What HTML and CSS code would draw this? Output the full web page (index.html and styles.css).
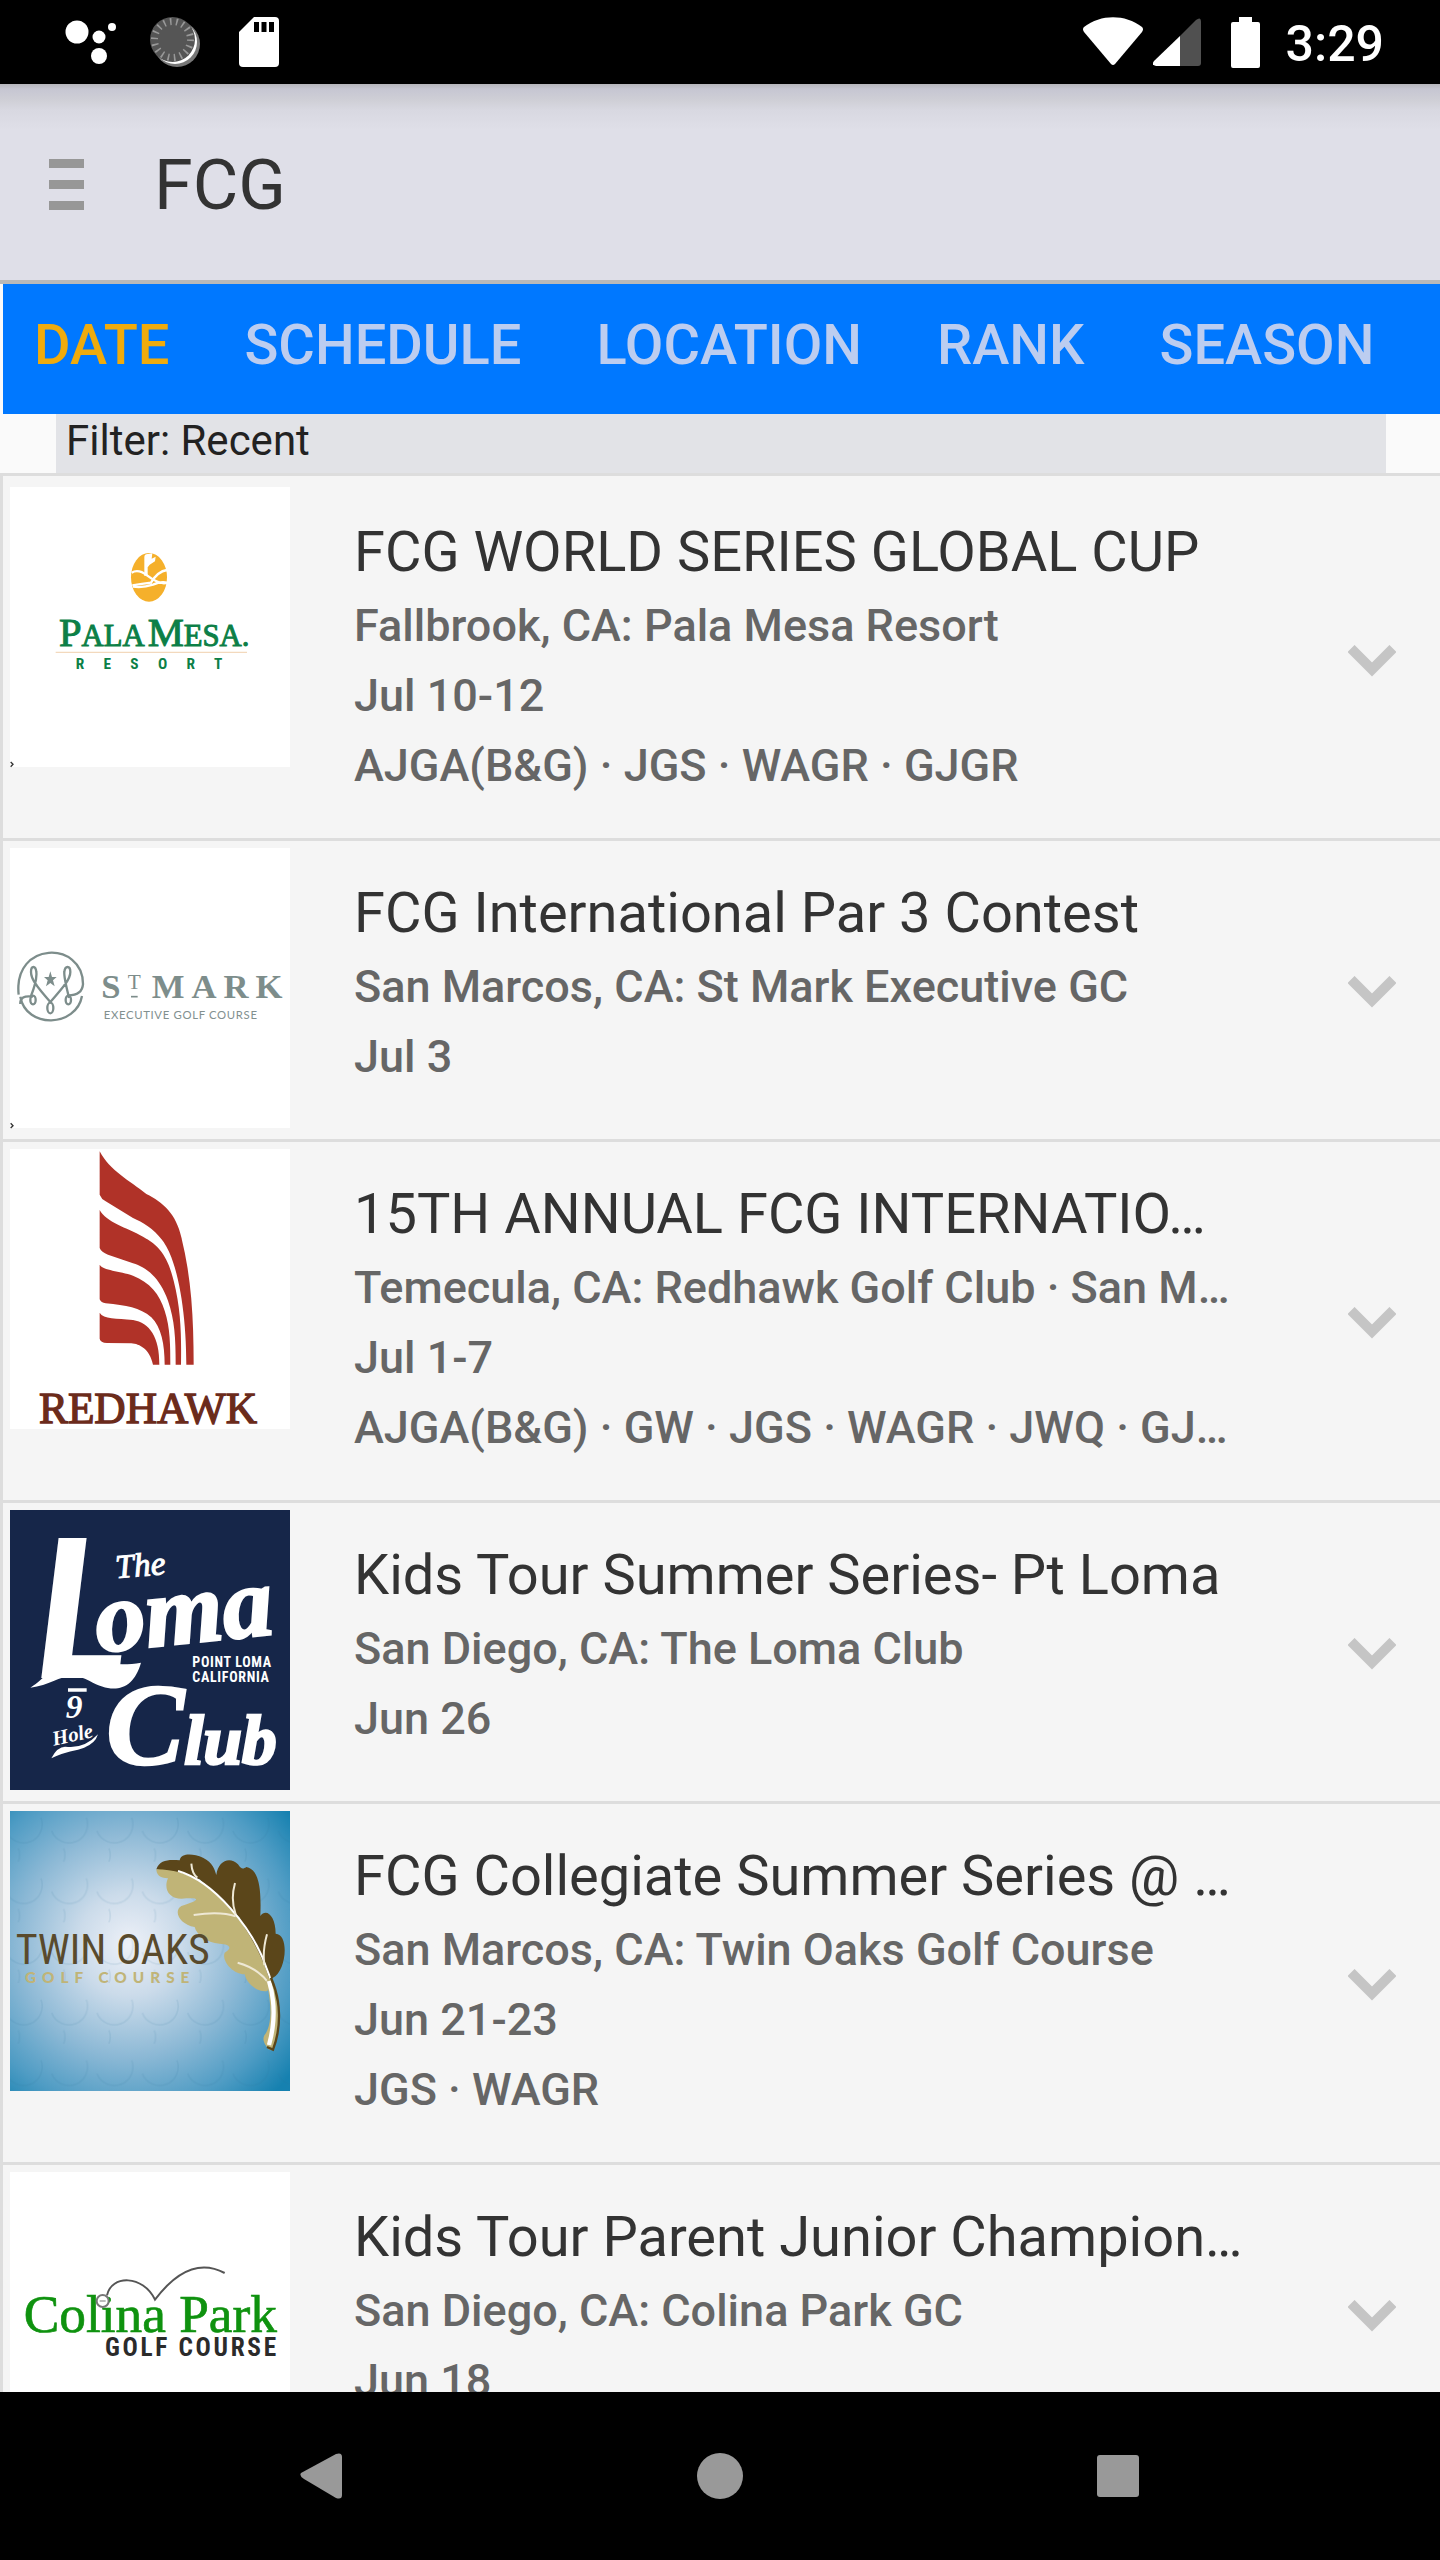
FILE: index.html
```html
<!DOCTYPE html>
<html lang="en">
<head>
<meta charset="utf-8">
<meta name="viewport" content="width=device-width, initial-scale=1">
<title>FCG</title>
<link rel="stylesheet" href="styles.css">
</head>
<body>
<div class="app">
  <div class="status">
    <div class="status-left">
      <svg width="52" height="44" viewBox="0 0 52 44" fill="#fff" aria-hidden="true"><circle cx="12" cy="12" r="11.5"/><circle cx="34" cy="17" r="6.5"/><circle cx="47" cy="7" r="4"/><circle cx="34" cy="36" r="8"/></svg>
      <svg width="50" height="50" viewBox="0 0 50 50" aria-hidden="true"><circle cx="27" cy="27" r="23" fill="#777"/><circle cx="25" cy="25" r="22" fill="#fff"/><circle cx="22.500" cy="22.500" r="22.500" fill="#555"/><circle cx="22.500" cy="22.500" r="18" fill="none" stroke="#999" stroke-width="7" stroke-dasharray="1.600 4.683"/></svg>
      <svg width="40" height="50" viewBox="0 0 40 50" aria-hidden="true"><path d="M15 0h21a4 4 0 0 1 4 4v42a4 4 0 0 1-4 4H4a4 4 0 0 1-4-4V15z" fill="#fff"/><path d="M15 5h5v10h-5zM22.500 5h5v10h-5zM30 5h5v10h-5z"/></svg>
    </div>
    <div class="status-right">
      <svg width="60" height="50" viewBox="0 0 60 50" fill="#fff" aria-hidden="true"><path d="M1 10C18-3 42-3 59 10q2 2 0 5L32 47q-2 2-4 0L1 15q-2-3 0-5z"/></svg>
      <svg class="signal" width="48" height="48" viewBox="0 0 48 48" aria-hidden="true"><path d="M27 18 43 2q5-4 5 2v41q0 3-3 3H27z" fill="#505050"/><path d="M27 18v30H3q-5-1-2-5z" fill="#fff"/></svg>
      <svg width="29" height="51" viewBox="0 0 29 51" fill="#fff" aria-hidden="true"><path d="M8 0h13v5h6q2 0 2 2v42q0 2-2 2H2q-2 0-2-2V7q0-2 2-2h6z"/></svg>
      <time class="clock">3:29</time>
    </div>
  </div>

  <header class="header">
    <button class="menu" type="button" aria-label="Menu">
      <svg width="35" height="51" viewBox="0 0 35 51" fill="#979797"><path d="M0 0h35v9H0zM0 21h35v9H0zM0 42h35v9H0z"/></svg>
    </button>
    <h1 class="title">FCG</h1>
  </header>

  <nav class="tabs">
    <a class="tab active" href="#date">DATE</a>
    <a class="tab" href="#schedule">SCHEDULE</a>
    <a class="tab" href="#location">LOCATION</a>
    <a class="tab" href="#rank">RANK</a>
    <a class="tab" href="#season">SEASON</a>
  </nav>

  <p class="filter">Filter: Recent</p>

  <main class="list">
    <article class="row">
      <svg class="logo" viewBox="31 51 840 840">
        <path d="M31 51h840v840H31z" fill="#fff"/>
        <ellipse cx="448" cy="322" rx="54" ry="73" fill="#f5b02b"/>
        <path d="M396 308q20-12 46 8 40 30 60 22M398 346q30-4 56-8 20-34 48-38M400 350q30 4 60-6 22-10 42-6" fill="none" stroke="#fff" stroke-width="7"/>
        <path d="M434 318V262q0-10 10-10l14-2-2 16 12-6-2 14-16 10-6 8v24z" fill="#fff"/>
        <g class="serif" fill="#0c7f47" stroke="#0c7f47" stroke-width="3"><text x="178" y="527" font-size="122">P<tspan font-size="92">ALA</tspan></text><text x="444" y="527" font-size="122">M<tspan font-size="92">ESA.</tspan></text></g>
        <path d="M168 547h574" stroke="#f3d9bd" stroke-width="4"/>
        <text class="narrow track-wide" x="228" y="597" font-size="46" font-weight="700" fill="#0c7f47">RESORT</text>
        <path d="M33 876l7 7-7 7" fill="none" stroke="#333" stroke-width="4"/>
      </svg>
      <div class="info">
        <h2>FCG WORLD SERIES GLOBAL CUP</h2>
        <p>Fallbrook, CA: Pala Mesa Resort</p>
        <p>Jul 10-12</p>
        <p>AJGA(B&amp;G) · JGS · WAGR · GJGR</p>
      </div>
      <button class="expand" type="button" aria-label="Expand"><svg width="48" height="32" viewBox="0 0 48 32"><path d="M3 3.500 24 24.500 45 3.500" fill="none" stroke="#c5c5c5" stroke-width="10"/></svg></button>
    </article>

    <article class="row">
      <svg class="logo" viewBox="31 52 840 840">
        <path d="M31 52h840v840H31z" fill="#fff"/>
        <g fill="none" stroke="#7d8d8b" stroke-width="7">
          <path d="M57 492C40 330 250 330 250 460q-2 34-44 34M62 498C80 596 230 590 247 496"/>
          <path d="M62 520q-2-28 38-22M94 496C108 460 112 440 110 424 108 404 94 404 94 424c0 20 14 40 58 90 44-50 60-70 60-90 0-20-16-20-18 0-2 16 8 50 14 78"/>
          <ellipse cx="100" cy="508" rx="8" ry="13"/><ellipse cx="206" cy="508" rx="8" ry="13"/><ellipse cx="152" cy="532" rx="9" ry="16"/>
        </g>
        <path d="M152 422l5 17h14l-11 10 5 18-13-10-13 10 5-18-11-10h14z" fill="#7d8d8b"/>
        <g class="serif" fill="#7d8d8b" font-weight="700"><text x="305" y="503" font-size="104">S</text><text x="384" y="476" font-size="64" font-weight="400">T</text><text class="track-mark" x="456" y="503" font-size="104">MARK</text></g>
        <path d="M394 498h20" stroke="#7d8d8b" stroke-width="5"/>
        <text class="lato track-small" x="312" y="566" font-size="34" fill="#82908f">EXECUTIVE GOLF COURSE</text>
        <path d="M33 878l7 7-7 7" fill="none" stroke="#333" stroke-width="4"/>
      </svg>
      <div class="info">
        <h2>FCG International Par 3 Contest</h2>
        <p>San Marcos, CA: St Mark Executive GC</p>
        <p>Jul 3</p>
      </div>
      <button class="expand" type="button" aria-label="Expand"><svg width="48" height="32" viewBox="0 0 48 32"><path d="M3 3.500 24 24.500 45 3.500" fill="none" stroke="#c5c5c5" stroke-width="10"/></svg></button>
    </article>

    <article class="row">
      <svg class="logo" viewBox="31 55 840 840">
        <path d="M31 55h840v840H31z" fill="#fff"/>
        <g fill="#b03228">
          <path d="M300 62C330 120 390 150 440 190 490 215 530 250 545 320 575 440 582 560 582 702H560C560 580 545 460 515 380 490 310 440 280 400 262L318 212Q305 205 300 192z"/>
          <path d="M300 238C320 275 380 290 430 318 480 345 505 380 522 450 545 540 545 620 544 702H528C528 620 525 570 505 510 480 440 440 410 400 398L325 372Q305 365 300 352z"/>
          <path d="M300 402C310 420 360 420 400 435 450 455 480 490 495 540 512 590 512 650 512 702H495C495 640 485 590 455 560 420 530 380 525 318 518Q304 516 300 506z"/>
          <path d="M300 546C312 566 350 562 400 568 450 576 480 620 479 702H460C450 655 420 640 395 638L322 637Q302 636 300 624z"/>
        </g>
        <text class="serif" x="118" y="878" font-size="130" fill="#6b2b1b" stroke="#6b2b1b" stroke-width="4">REDHAWK</text>
      </svg>
      <div class="info">
        <h2>15TH ANNUAL FCG INTERNATIO…</h2>
        <p>Temecula, CA: Redhawk Golf Club · San M…</p>
        <p>Jul 1-7</p>
        <p>AJGA(B&amp;G) · GW · JGS · WAGR · JWQ · GJ…</p>
      </div>
      <button class="expand" type="button" aria-label="Expand"><svg width="48" height="32" viewBox="0 0 48 32"><path d="M3 3.500 24 24.500 45 3.500" fill="none" stroke="#c5c5c5" stroke-width="10"/></svg></button>
    </article>

    <article class="row">
      <svg class="logo" viewBox="31 57 840 840">
        <path d="M31 57h840v840H31z" fill="#162649"/>
        <text class="lato" x="105" y="560" font-size="580" font-weight="900" font-style="italic" fill="#fff">L</text>
        <g class="serif" fill="#fff" font-weight="700" font-style="italic">
          <text x="296" y="484" font-size="300" stroke="#fff" stroke-width="8" transform="rotate(-6 296 484)">oma</text>
          <text x="350" y="262" font-size="100" transform="rotate(-5 350 262)" font-weight="400" stroke="#fff" stroke-width="3">The</text>
          <text x="320" y="818" font-size="350" stroke="#fff" stroke-width="8">C<tspan font-size="208">lub</tspan></text>
          <text x="198" y="680" font-size="100">9</text>
          <text x="162" y="764" font-size="62" transform="rotate(-12 162 764)">Hole</text>
        </g>
        <path d="M92 590C140 560 160 520 190 522 260 500 340 530 424 515 400 600 340 610 270 570 200 530 170 580 92 590zM205 592h56v10h-56zM155 802q20-40 50-34 50 4 90-38-10 34-60 46-50 10-80 26z" fill="#fff"/>
        <g class="narrow track-loma" fill="#fff" font-weight="700" font-size="42"><text x="578" y="527">POINT LOMA</text><text x="578" y="573">CALIFORNIA</text></g>
      </svg>
      <div class="info">
        <h2>Kids Tour Summer Series- Pt Loma</h2>
        <p>San Diego, CA: The Loma Club</p>
        <p>Jun 26</p>
      </div>
      <button class="expand" type="button" aria-label="Expand"><svg width="48" height="32" viewBox="0 0 48 32"><path d="M3 3.500 24 24.500 45 3.500" fill="none" stroke="#c5c5c5" stroke-width="10"/></svg></button>
    </article>

    <article class="row">
      <svg class="logo" viewBox="31 30 840 840">
        <defs>
          <radialGradient id="sky" cx="390" cy="430" r="620" gradientUnits="userSpaceOnUse"><stop offset="0" stop-color="#eef1f8"/><stop offset=".25" stop-color="#cbdbea"/><stop offset=".55" stop-color="#8bb8d5"/><stop offset=".8" stop-color="#4f9cc4"/><stop offset="1" stop-color="#1681b0"/></radialGradient>
          <pattern id="dimples" width="136" height="182" patternUnits="userSpaceOnUse"><g fill="none" stroke="#2a6f98" stroke-opacity=".1" stroke-width="5"><path d="M20 90a52 52 0 0 0 104-40M-48 182a52 52 0 0 0 104-40M88 182a52 52 0 0 0 104-40"/></g></pattern>
        </defs>
        <path d="M31 30h840v840H31z" fill="url(#sky)"/>
        <path d="M31 30h840v840H31z" fill="url(#dimples)"/>
        <path d="M470 205C480 175 510 175 540 178 545 155 580 158 610 170 640 185 645 205 650 222 655 180 690 165 715 190 725 205 730 205 740 198 780 205 785 270 782 345 800 320 828 345 828 398 870 400 860 510 820 530L805 545 720 350 600 235z" fill="#5b461a"/>
        <path d="M470 205C520 205 570 220 610 245 700 310 780 430 812 545L803 570C770 575 740 545 735 520 700 520 665 480 675 455 700 440 690 430 660 428 620 425 590 400 585 378 540 370 520 330 545 315 590 300 610 290 560 292 510 300 490 265 505 232 480 232 470 220 470 205z" fill="#c0b477"/>
        <path d="M535 210C640 240 760 380 800 500 830 570 830 640 815 740" fill="none" stroke="#fff" stroke-width="6"/>
        <path d="M575 188q2 30 18 42M706 246q-14 50 2 94M582 342q80-12 126 4M802 400q-14 50-8 92M714 485q60 16 94 62" fill="none" stroke="#eee8d5" stroke-width="6"/>
        <path d="M812 530C845 600 845 680 822 745q-14 8-20-6-16-22-8-36C822 670 812 590 800 540z" fill="#c0b477"/>
        <path d="M808 540C826 600 828 660 808 732" fill="none" stroke="#fff" stroke-width="13"/>
        <path d="M814 530C845 600 845 680 820 746l-18-8" fill="none" stroke="#5b461a" stroke-width="7"/>
        <text class="narrow" x="48" y="490" font-size="126" fill="#594a2c">TWIN OAKS</text>
        <text class="lato track-oaks" x="76" y="547" font-size="46" font-weight="900" fill="#c0b477">GOLF COURSE</text>
      </svg>
      <div class="info">
        <h2>FCG Collegiate Summer Series @ …</h2>
        <p>San Marcos, CA: Twin Oaks Golf Course</p>
        <p>Jun 21-23</p>
        <p>JGS · WAGR</p>
      </div>
      <button class="expand" type="button" aria-label="Expand"><svg width="48" height="32" viewBox="0 0 48 32"><path d="M3 3.500 24 24.500 45 3.500" fill="none" stroke="#c5c5c5" stroke-width="10"/></svg></button>
    </article>

    <article class="row">
      <svg class="logo" viewBox="31 62 840 840">
        <path d="M31 62h840v840H31z" fill="#fff"/>
        <text class="serif" x="72" y="541" font-size="160" fill="#0f920f" stroke="#0f920f" stroke-width="2">Colina Park</text>
        <circle cx="309" cy="449" r="18" fill="#fff" stroke="#777" stroke-width="6"/>
        <path d="M300 449h18" stroke="#999" stroke-width="4"/>
        <path d="M322 432C335 370 430 370 466 445 530 360 600 325 675 365" fill="none" stroke="#555" stroke-width="6"/>
        <text class="narrow track-colina" x="316" y="615" font-size="76" font-weight="700" fill="#2b2b2b">GOLF COURSE</text>
      </svg>
      <div class="info">
        <h2>Kids Tour Parent Junior Champion…</h2>
        <p>San Diego, CA: Colina Park GC</p>
        <p>Jun 18</p>
      </div>
      <button class="expand" type="button" aria-label="Expand"><svg width="48" height="32" viewBox="0 0 48 32"><path d="M3 3.500 24 24.500 45 3.500" fill="none" stroke="#c5c5c5" stroke-width="10"/></svg></button>
    </article>
  </main>

  <div class="navbar">
    <button type="button" aria-label="Back"><svg width="46" height="46" viewBox="0 0 46 46" fill="#999"><path d="M2 20 37 1q6-2 6 3v38q0 5-6 3L5 26q-5-3-3-6z"/></svg></button>
    <button type="button" aria-label="Home"><svg width="46" height="46" viewBox="0 0 46 46" fill="#999"><circle cx="23" cy="23" r="23"/></svg></button>
    <button type="button" aria-label="Recent apps"><svg width="46" height="46" viewBox="0 0 46 46" fill="#999"><rect x="2" y="2" width="42" height="42" rx="3"/></svg></button>
  </div>
</div>
</body>
</html>
```
FILE: styles.css
```css
* { box-sizing: border-box; }

body {
  margin: 0;
  background: #fafafa;
  color: #333;
  font-family: Roboto, "Liberation Sans", sans-serif;
}

h1, h2, p { margin: 0; font-weight: 400; }

button {
  padding: 0;
  border: 0;
  background: none;
  font: inherit;
  cursor: pointer;
}

svg { display: block; flex: none; }

.app {
  display: flex;
  flex-direction: column;
  height: 100vh;
}

.status {
  flex: none;
  display: flex;
  justify-content: space-between;
  align-items: center;
  height: 84px;
  padding: 0 56px 0 65px;
  background: #000;
}

.status-left { display: flex; align-items: center; gap: 33px; }
.status-left svg:nth-child(2) { margin-right: 6px; }
.status-right { display: flex; align-items: center; gap: 10px; }
.signal { margin-right: 20px; }

.clock {
  margin-left: 16px;
  padding-top: 4px;
  color: #fff;
  font-size: 50px;
  font-weight: 500;
  line-height: 60px;
}

.header {
  flex: none;
  display: flex;
  align-items: center;
  gap: 70px;
  height: 200px;
  padding: 5px 0 0 49px;
  border-bottom: 4px solid #b9b9b9;
  background: linear-gradient(#b6b6bb, #c6c6d2 5px, #cfcfd6 16px, #d8d8e1 26px, #dfdfe8 46px);
}

.title { font-size: 70px; line-height: 84px; }

.tabs {
  flex: none;
  display: flex;
  gap: 75px;
  margin-left: 3px;
  padding: 25px 31px 33px;
  background: #0078ff;
}

.tab {
  color: #bccdf0;
  font-size: 56px;
  font-weight: 500;
  line-height: 72px;
  text-decoration: none;
}

.tab.active { color: #f0ab0c; }

.filter {
  flex: none;
  margin: 0 54px 0 56px;
  padding: 1px 10px 6px;
  background: #e2e3e7;
  color: #222;
  font-size: 42px;
  line-height: 52px;
}

.list {
  flex: 1;
  min-height: 0;
  overflow-y: auto;
  scrollbar-width: none;
  border-top: 3px solid #ddd;
  border-left: 3px solid #ddd;
  padding-top: 4px;
  background: #f5f5f5;
}

.row {
  display: flex;
  align-items: flex-start;
  padding: 7px 44px 11px 7px;
  border-bottom: 3px solid #ddd;
}

.logo { width: 280px; height: 280px; overflow: visible; }

.info {
  flex: 1;
  min-width: 0;
  margin-left: 64px;
  padding: 26px 0;
}

.info h2, .info p {
  overflow: hidden;
  white-space: nowrap;
  text-overflow: ellipsis;
}

.info h2 { font-size: 56px; line-height: 78px; }

.info p {
  color: #666;
  font-size: 45px;
  font-weight: 500;
  line-height: 70px;
}

.expand { align-self: center; margin: 8px 0 0 40px; }

.serif { font-family: "Liberation Serif", serif; }
.narrow { font-family: "Liberation Sans Narrow", "Roboto Condensed", "Liberation Sans", sans-serif; }
.lato { font-family: Lato, sans-serif; }
.track-wide { letter-spacing: 58px; }
.track-mark { letter-spacing: 21px; }
.track-small { letter-spacing: 2px; }
.track-loma { letter-spacing: 2px; }
.track-oaks { letter-spacing: 18px; }
.track-colina { letter-spacing: 8px; }

.navbar {
  flex: none;
  display: flex;
  justify-content: center;
  height: 168px;
  background: #000;
}

.navbar button {
  display: flex;
  align-items: center;
  justify-content: center;
  width: 398px;
}
```
